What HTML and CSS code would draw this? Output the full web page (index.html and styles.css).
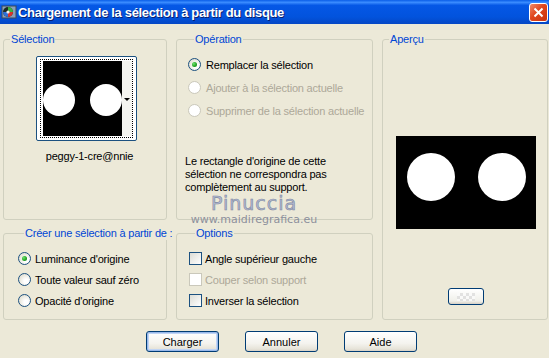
FILE: index.html
```html
<!DOCTYPE html>
<html lang="fr">
<head>
    <meta charset="UTF-8">
    <meta name="viewport" content="width=device-width, initial-scale=1.0">
    <title>Chargement de la sélection à partir du disque</title>
    <link rel="stylesheet" href="styles.css">
</head>
<body>
    <div class="window">
        <div class="titlebar">
            <svg class="app-icon" width="16" height="16" viewBox="0 0 16 16">
                <rect x="1" y="2" width="14" height="12" fill="#8aa0b8" stroke="#3a4a5a"/>
                <circle cx="7" cy="8" r="5" fill="#1e2a24"/>
                <path d="M7 3 A5 5 0 0 1 12 8 L7 8 Z" fill="#3cb043"/>
                <path d="M12 8 A5 5 0 0 1 7 13 L7 8 Z" fill="#d8342c"/>
                <path d="M7 13 A5 5 0 0 1 2 8 L7 8 Z" fill="#2f6fd6"/>
                <circle cx="7" cy="8" r="1.6" fill="#f0f0f0"/>
            </svg>
            <span class="title">Chargement de la sélection à partir du disque</span>
            <span class="close-btn">
                <svg width="11" height="11" viewBox="0 0 11 11">
                    <path d="M1.5 1.5 L9.5 9.5 M9.5 1.5 L1.5 9.5" stroke="#fff" stroke-width="2"/>
                </svg>
            </span>
        </div>

        <div class="content">
            <div class="groups">
                <!-- Sélection -->
                <fieldset class="group group-selection">
                    <legend>Sélection</legend>
                    <div class="thumb">
                        <div class="thumb-focus">
                            <svg class="thumb-img" width="79" height="75" viewBox="0 0 79 75">
                                <rect width="79" height="75" fill="#000"/>
                                <circle cx="16" cy="39" r="16" fill="#fff"/>
                                <circle cx="63" cy="39" r="16" fill="#fff"/>
                            </svg>
                            <div class="thumb-strip"><span class="arrow"></span></div>
                        </div>
                    </div>
                    <div class="thumb-name">peggy-1-cre@nnie</div>
                </fieldset>

                <!-- Opération -->
                <fieldset class="group group-operation">
                    <legend>Opération</legend>
                    <div class="row"><span class="radio checked"></span><span>Remplacer la sélection</span></div>
                    <div class="row disabled"><span class="radio"></span><span>Ajouter à la sélection actuelle</span></div>
                    <div class="row disabled"><span class="radio"></span><span>Supprimer de la sélection actuelle</span></div>
                    <p class="note">Le rectangle d'origine de cette sélection ne correspondra pas complètement au support.</p>
                </fieldset>

                <!-- Aperçu -->
                <fieldset class="group group-preview">
                    <legend>Aperçu</legend>
                    <svg class="preview" width="140" height="93" viewBox="0 0 140 93">
                        <rect width="140" height="93" fill="#000"/>
                        <circle cx="35" cy="41" r="24" fill="#fff"/>
                        <circle cx="106" cy="41" r="24" fill="#fff"/>
                    </svg>
                    <span class="mini-btn"><span class="checker"></span></span>
                </fieldset>

                <!-- Créer -->
                <fieldset class="group group-create">
                    <legend>Créer une sélection à partir de :</legend>
                    <div class="row"><span class="radio checked"></span><span>Luminance d'origine</span></div>
                    <div class="row"><span class="radio"></span><span>Toute valeur sauf zéro</span></div>
                    <div class="row"><span class="radio"></span><span>Opacité d'origine</span></div>
                </fieldset>

                <!-- Options -->
                <fieldset class="group group-options">
                    <legend>Options</legend>
                    <div class="row"><span class="check"></span><span>Angle supérieur gauche</span></div>
                    <div class="row disabled"><span class="check"></span><span>Couper selon support</span></div>
                    <div class="row"><span class="check"></span><span>Inverser la sélection</span></div>
                </fieldset>
            </div>

            <div class="buttons">
                <button class="btn default">Charger</button>
                <button class="btn">Annuler</button>
                <button class="btn">Aide</button>
            </div>

            <div class="watermark">
                <span class="wm-name">Pinuccia</span>
                <span class="wm-url">www.maidiregrafica.eu</span>
            </div>
        </div>
    </div>
</body>
</html>
```

FILE: styles.css
```css
body {
    margin: 0;
    padding: 0;
    background-color: #ece9d8;
    font-family: "Liberation Sans", Arial, sans-serif;
    font-size: 11px;
    letter-spacing: -0.2px;
    color: #000;
}

.window {
    width: 549px;
    height: 358px;
    position: relative;
    overflow: hidden;
}

.titlebar {
    height: 24px;
    display: flex;
    align-items: center;
    background: linear-gradient(#0a5ee8 0%, #3a8cff 10%, #0558e6 22%, #0253dd 70%, #0547c4 100%);
}

.app-icon {
    margin-left: 1px;
    flex: none;
}

.title {
    color: #fff;
    font-weight: bold;
    font-size: 13px;
    letter-spacing: -0.35px;
    text-shadow: 1px 1px 0 #0a1e6e;
    flex: 1;
    padding-left: 1px;
}

.close-btn {
    width: 17px;
    height: 17px;
    margin-right: 1px;
    border: 1px solid #fff;
    border-radius: 3px;
    background: linear-gradient(135deg, #f08a6a, #e0461e 45%, #c83410);
    display: flex;
    align-items: center;
    justify-content: center;
}

.content {
    padding: 9px 1px 0 3px;
}

.groups {
    display: grid;
    grid-template-columns: 164px 197px 166px;
    grid-template-rows: 187px 93px;
    column-gap: 9px;
    row-gap: 7px;
}

.group {
    margin: 0;
    padding: 0;
    border: 1px solid #d0d0bf;
    border-radius: 3px;
    min-width: 0;
}

.group legend {
    color: #0046d5;
    padding: 0 1px;
    margin-left: 6px;
    line-height: 13px;
    white-space: nowrap;
}

.group-preview {
    grid-column: 3;
    grid-row: 1 / span 2;
    display: flex;
    flex-direction: column;
    align-items: center;
}

/* Sélection thumbnail */
.group-selection {
    display: flex;
    flex-direction: column;
    align-items: center;
}

.thumb {
    margin-top: 10px;
    margin-left: 2px;
    width: 99px;
    height: 83px;
    border: 1px solid #1c5180;
    border-radius: 2px;
    background: #fff;
    display: flex;
    align-items: center;
    justify-content: center;
}

.thumb-focus {
    width: 93px;
    height: 79px;
    border: 1px dotted #000;
    display: flex;
    align-items: center;
    padding-left: 2px;
    box-sizing: border-box;
}

.thumb-strip {
    flex: 1;
    height: 75px;
    background: #f4f4f0;
    position: relative;
}

.arrow {
    position: absolute;
    right: 2px;
    top: 37px;
    width: 0;
    height: 0;
    border-left: 3px solid transparent;
    border-right: 3px solid transparent;
    border-top: 3px solid #000;
}

.thumb-name {
    margin-top: 9px;
    margin-left: 9px;
    line-height: 13px;
}

/* radios and checkboxes */
.row {
    display: flex;
    align-items: center;
    height: 23px;
    white-space: nowrap;
}

.radio {
    width: 13px;
    height: 13px;
    box-sizing: border-box;
    border: 1px solid #1c5180;
    border-radius: 50%;
    background: radial-gradient(circle at 65% 65%, #fff 20%, #e6e4d8 70%, #d4d2c4);
    margin-right: 5px;
    flex: none;
    display: flex;
    align-items: center;
    justify-content: center;
}

.radio.checked::after {
    content: "";
    width: 5px;
    height: 5px;
    border-radius: 50%;
    background: radial-gradient(circle at 35% 35%, #6ee26e, #21a121 60%, #1a7a1a);
}

.check {
    width: 13px;
    height: 13px;
    box-sizing: border-box;
    border: 1px solid #1c5180;
    background: linear-gradient(135deg, #dcdcd5, #fff);
    margin-right: 3px;
    flex: none;
}

.row.disabled {
    color: #aca899;
}

.row.disabled .radio,
.row.disabled .check {
    border-color: #cac8bb;
    background: #fff;
}

.group-operation {
    padding: 7px 0 0 11px;
}

.note {
    margin: 33px 0 0 -3px;
    line-height: 13px;
    width: 180px;
}

.group-create {
    padding: 8px 0 0 14px;
}

.group-create .row,
.group-options .row {
    height: 21px;
}

.group-create .radio {
    margin-right: 4px;
}

.group-options {
    padding: 8px 0 0 12px;
}

/* Aperçu */
.preview {
    margin-top: 90px;
    margin-left: 1px;
}

.mini-btn {
    margin-top: 59px;
    margin-left: 1px;
    width: 36px;
    height: 17px;
    box-sizing: border-box;
    border: 1px solid #003c74;
    border-radius: 3px;
    background: linear-gradient(#fff, #f0f0ea 80%, #d6d0c5);
    display: flex;
    align-items: center;
    justify-content: center;
}

.checker {
    width: 18px;
    height: 8px;
    background: repeating-conic-gradient(#dcdcdc 0 25%, #fafafa 0 50%) 0 0 / 6px 6px;
    opacity: 0.8;
}

/* buttons */
.buttons {
    display: flex;
    gap: 26px;
    padding-left: 143px;
    margin-top: 11px;
}

.btn {
    width: 73px;
    height: 21px;
    padding: 0;
    font-family: "Liberation Sans", Arial, sans-serif;
    font-size: 11px;
    color: #000;
    border: 1px solid #003c74;
    border-radius: 3px;
    background: linear-gradient(#fff, #f4f3ee 60%, #e6e3d8 90%, #d6d0c5);
}

.btn.default {
    box-shadow: inset 0 0 0 1px #98b8ea, inset 0 0 0 2px #c0d4f4;
}

/* watermark over the dialog */
.watermark {
    position: absolute;
    left: 190px;
    top: 194px;
    width: 128px;
    display: flex;
    flex-direction: column;
    align-items: center;
    pointer-events: none;
}

.wm-name {
    font-family: "DejaVu Sans", sans-serif;
    font-size: 19px;
    letter-spacing: 1px;
    color: #b4bcd4;
    -webkit-text-stroke: 0.6px #7c86a0;
    line-height: 19px;
}

.wm-url {
    font-family: "DejaVu Sans", sans-serif;
    font-size: 11px;
    letter-spacing: 0;
    color: #8c909c;
    line-height: 12px;
    margin-top: 1px;
}
```
